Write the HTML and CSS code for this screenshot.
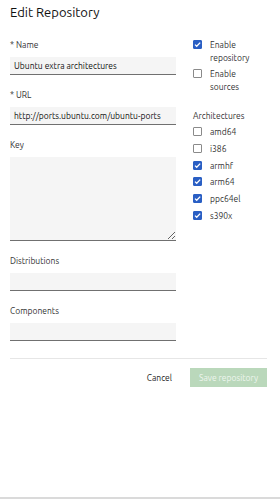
FILE: index.html
```html
<!DOCTYPE html>
<html lang="en">
<head>
  <meta charset="UTF-8" />
  <meta name="viewport" content="width=device-width, initial-scale=1.0"/>
  <title>Edit Repository</title>
  <link rel="stylesheet" href="styles.css">
</head>
<body>
  <div class="dialog">
    <h1 class="title">Edit Repository</h1>

    <div class="form">
      <div class="fields">
        <div class="field">
          <label>* Name</label>
          <input type="text" value="Ubuntu extra architectures">
        </div>
        <div class="field">
          <label>* URL</label>
          <input type="text" value="http://ports.ubuntu.com/ubuntu-ports">
        </div>
        <div class="field">
          <label>Key</label>
          <textarea></textarea>
        </div>
        <div class="field">
          <label>Distributions</label>
          <input type="text" value="">
        </div>
        <div class="field">
          <label>Components</label>
          <input type="text" value="">
        </div>
      </div>

      <div class="side">
        <div class="options">
          <label class="check"><input type="checkbox" checked><span>Enable repository</span></label>
          <label class="check"><input type="checkbox"><span>Enable sources</span></label>
        </div>
        <h2>Architectures</h2>
        <div class="arch-list">
          <label class="check"><input type="checkbox"><span>amd64</span></label>
          <label class="check"><input type="checkbox"><span>i386</span></label>
          <label class="check"><input type="checkbox" checked><span>armhf</span></label>
          <label class="check"><input type="checkbox" checked><span>arm64</span></label>
          <label class="check"><input type="checkbox" checked><span>ppc64el</span></label>
          <label class="check"><input type="checkbox" checked><span>s390x</span></label>
        </div>
      </div>
    </div>

    <div class="footer">
      <button class="btn-cancel">Cancel</button>
      <button class="btn-save" disabled>Save repository</button>
    </div>
  </div>
</body>
</html>
```

FILE: styles.css
```css
* { margin: 0; padding: 0; box-sizing: border-box; }
body {
  font-family: 'Ubuntu', 'Noto Sans', sans-serif;
  color: #222;
  background: #fff;
}
.dialog {
  min-height: 100vh;
  padding: 4px 13px 0 10px;
  border-bottom: 2px solid #dadada;
}
.title {
  font-size: 13px;
  font-weight: 400;
  line-height: 16px;
  color: #111;
  margin-bottom: 19px;
}
.form {
  display: flex;
  gap: 17px;
}
.fields {
  width: 166px;
  display: flex;
  flex-direction: column;
  gap: 14px;
}
.field {
  display: flex;
  flex-direction: column;
  gap: 6px;
}
.field label {
  font-size: 8.5px;
  line-height: 12px;
  color: #333;
}
.field input,
.field textarea {
  font-family: inherit;
  font-size: 8.5px;
  color: #111;
  background: #f5f5f5;
  border: none;
  border-bottom: 1px solid #707070;
  outline: none;
  height: 18px;
  padding: 0 4px;
}
.field textarea {
  height: 84px;
  resize: vertical;
}
.side {
  width: 60px;
  display: flex;
  flex-direction: column;
}
.options {
  display: flex;
  flex-direction: column;
  gap: 3px;
}
.check {
  display: flex;
  gap: 8px;
  font-size: 8.5px;
  line-height: 13px;
  color: #333;
}
.check input {
  appearance: none;
  flex: none;
  width: 9px;
  height: 9px;
  margin-top: 1px;
  border: 1px solid #8a8a8a;
  border-radius: 1px;
  background: #fff;
}
.check input:checked {
  border-color: #2a5fc4;
  background: #2a5fc4 url("data:image/svg+xml,%3Csvg xmlns='http://www.w3.org/2000/svg' viewBox='0 0 9 9'%3E%3Cpath d='M2 4.6l1.7 1.7L7.2 2.6' fill='none' stroke='%23fff' stroke-width='1.3'/%3E%3C/svg%3E") center/9px 9px no-repeat;
}
.side h2 {
  font-size: 8.5px;
  font-weight: 400;
  line-height: 12px;
  color: #333;
  margin-top: 16px;
  margin-bottom: 4px;
  white-space: nowrap;
}
.arch-list {
  display: flex;
  flex-direction: column;
  gap: 3.8px;
}
.arch-list .check {
  white-space: nowrap;
}
.footer {
  margin-top: 17px;
  border-top: 1px solid #e6e6e6;
  padding-top: 9px;
  display: flex;
  justify-content: flex-end;
  gap: 8px;
}
.footer button {
  font-family: inherit;
  font-size: 8.5px;
  height: 19px;
  border: none;
  background: none;
  color: #222;
  padding: 0 10px;
  white-space: nowrap;
}
.footer .btn-save {
  width: 77px;
  padding: 0;
  background: #bad8bb;
  color: #eef6ee;
}
```
